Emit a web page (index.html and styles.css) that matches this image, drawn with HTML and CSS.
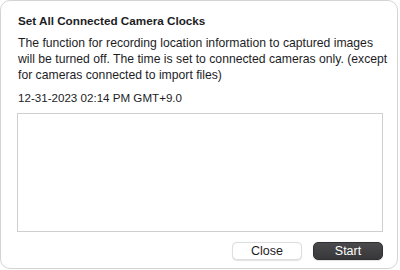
FILE: index.html
```html
<!DOCTYPE html>
<html lang="en">
<head>
    <meta charset="UTF-8">
    <title>Set All Connected Camera Clocks</title>
    <link rel="stylesheet" href="styles.css">
</head>
<body>
    <div class="dialog">
        <h2 class="title">Set All Connected Camera Clocks</h2>
        <p class="message">The function for recording location information to captured images<br>will be turned off. The time is set to connected cameras only. (except<br>for cameras connected to import files)</p>
        <p class="clock">12-31-2023 02:14 PM GMT+9.0</p>
        <div class="log"></div>
        <div class="actions">
            <button type="button" class="btn">Close</button>
            <button type="button" class="btn btn-primary">Start</button>
        </div>
    </div>
</body>
</html>
```

FILE: styles.css
```css
html, body {
    margin: 0;
    padding: 0;
    background: #ffffff;
}
body {
    font-family: "Liberation Sans", Arial, sans-serif;
    color: #1d1d1f;
}
.dialog {
    width: 398px;
    height: 269px;
    box-sizing: border-box;
    border: 1px solid #d4d4d4;
    border-radius: 10px;
    padding: 12px 14px 0 17px;
    display: flex;
    flex-direction: column;
}
.title {
    margin: 0;
    font-size: 11.7px;
    line-height: 16px;
    font-weight: bold;
}
.message {
    margin: 6px -12px 0 0;
    font-size: 12.2px;
    line-height: 16px;
    white-space: nowrap;
}
.clock {
    margin: 7px 0 0;
    font-size: 11.6px;
    line-height: 16px;
}
.log {
    margin-left: -1px;
    margin-top: 7px;
    height: 119px;
    box-sizing: border-box;
    border: 1px solid #cfcfcf;
    background: #ffffff;
}
.actions {
    display: flex;
    justify-content: flex-end;
    gap: 11px;
    margin-top: 10px;
}
.btn {
    width: 70px;
    height: 18px;
    padding: 0;
    font-family: inherit;
    font-size: 12.5px;
    line-height: 16px;
    color: #1d1d1f;
    background: #ffffff;
    border: 1px solid #dedede;
    border-radius: 5px;
    box-shadow: 0 0.5px 1px rgba(0, 0, 0, 0.12);
}
.btn-primary {
    color: #ffffff;
    background: linear-gradient(#4a4a4c, #38383a);
    border-color: #303032;
}
```
